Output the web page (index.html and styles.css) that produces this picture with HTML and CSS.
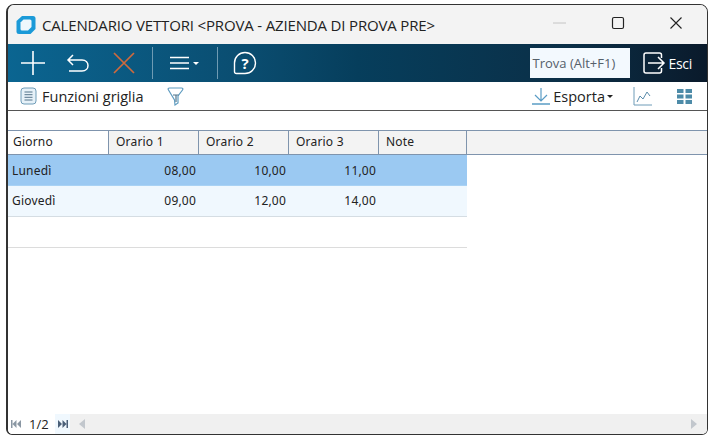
FILE: index.html
```html
<!DOCTYPE html>
<html lang="it">
<head>
<meta charset="utf-8">
<title>Calendario vettori</title>
<link rel="stylesheet" href="styles.css">
</head>
<body>
<div class="window">
  <header class="titlebar">
    <svg class="logo" width="20" height="20" viewBox="0 0 20 20">
      <path d="M6 1H17Q19.500 1 19.500 3.500V14L14.500 19H3Q0.500 19 0.500 16.500V6Z" fill="#1b9ad8"/>
      <path d="M7.500 4.500H14Q15.500 4.500 15.500 6V12L12 15.500H6Q4.500 15.500 4.500 14V7.500Z" fill="#eef7fc"/>
    </svg>
    <span class="title">CALENDARIO VETTORI &lt;PROVA - AZIENDA DI PROVA PRE&gt;</span>
    <div class="winctrls">
      <svg width="16" height="16" viewBox="0 0 16 16"><path d="M1 8H14" stroke="#c4c4c4" fill="none"/></svg>
      <svg width="16" height="16" viewBox="0 0 16 16"><rect x="2.500" y="2.500" width="11" height="11" rx="1.500" stroke="#222" stroke-width="1.200" fill="none"/></svg>
      <svg width="16" height="16" viewBox="0 0 16 16"><path d="M2.500 2.500L13.500 13.500M13.500 2.500L2.500 13.500" stroke="#222" stroke-width="1.100" fill="none"/></svg>
    </div>
  </header>
  <div class="toolbar">
    <svg class="tool-add" width="26" height="26" viewBox="0 0 26 26"><path d="M13 1V25M1 13H25" stroke="#fff" stroke-width="1.600" fill="none"/></svg>
    <svg class="tool-undo" width="24" height="20" viewBox="0 0 24 20"><path d="M7 2L2 7L7 12M2 7H16C24 7 24 18 16 18H3" stroke="#fff" stroke-width="1.500" fill="none"/></svg>
    <svg class="tool-cancel" width="24" height="24" viewBox="0 0 24 24"><path d="M2 2L22 22M22 2L2 22" stroke="#d06a3c" stroke-width="1.700" fill="none"/></svg>
    <span class="sep"></span>
    <svg class="tool-menu" width="19" height="14" viewBox="0 0 19 14"><path d="M0 1.500H19M0 7H19M0 12.500H19" stroke="#fff" stroke-width="1.400" fill="none"/></svg>
    <span class="caret caret-light"></span>
    <span class="sep sep-b"></span>
    <svg class="tool-help" width="24" height="24" viewBox="0 0 24 24"><path d="M1.500 12A10.500 10.500 0 1 1 12 22.500H3.500Q1.500 22.500 1.500 20.500Z" stroke="#fff" stroke-width="1.400" fill="none"/><text x="12" y="17.500" text-anchor="middle" class="help-q">?</text></svg>
    <div class="toolbar-right">
      <div class="search">Trova (Alt+F1)</div>
      <div class="exit">
        <svg width="24" height="24" viewBox="0 0 24 24"><path d="M19.500 7V4Q19.500 2 17.500 2H4Q2 2 2 4V20Q2 22 4 22H17.500Q19.500 22 19.500 20V17M6 12H22M16 6L22 12L16 18" stroke="#fff" stroke-width="1.500" fill="none"/></svg>
        <span>Esci</span>
      </div>
    </div>
  </div>
  <div class="subbar">
    <svg class="sub-list" width="17" height="18" viewBox="0 0 17 18"><rect x="1" y="1" width="15" height="16" rx="3" fill="#e6f1f8" stroke="#6f9cb8"/><path d="M4.500 5H12.500M4.500 7.700H12.500M4.500 10.300H12.500M4.500 13H12.500" stroke="#55748a"/></svg>
    <span class="sub-label">Funzioni griglia</span>
    <svg class="sub-filter" width="17" height="19" viewBox="0 0 17 19"><path d="M2.500 1H14.500Q16.500 1 15.500 3L11 9V16L8 18L7.500 13L1.500 3Q0.500 1 2.500 1Z" fill="#fff" stroke="#5f9cc0" stroke-width="1.200"/><path d="M6 8H11.500M9 8V15" stroke="#50758c" stroke-width="1.200"/></svg>
    <div class="subbar-right">
      <svg width="18" height="18" viewBox="0 0 18 18"><path d="M9 1V14M3 8L9 14L15 8" stroke="#5a9cc5" fill="none" stroke-width="1.200"/><path d="M0 17H18" stroke="#5a9cc5" stroke-width="1.400"/></svg>
      <span class="sub-label export">Esporta</span>
      <span class="caret caret-dark"></span>
      <svg class="sub-chart" width="19" height="19" viewBox="0 0 19 19"><path d="M1 0V18H19" stroke="#6f9cb8" fill="none"/><path d="M4 15L7 9L10 12L14 5L17 9" stroke="#5a8cab" fill="none"/></svg>
      <svg class="sub-grid" width="15" height="15" viewBox="0 0 15 15"><path d="M0 0H6.500V4H0ZM8.500 0H15V4H8.500ZM0 5.500H6.500V9.500H0ZM8.500 5.500H15V9.500H8.500ZM0 11H6.500V15H0ZM8.500 11H15V15H8.500Z" fill="#4d8ba8"/></svg>
    </div>
  </div>
  <div class="content">
    <div class="grid-head">
      <div class="hcell hcell-active c1">Giorno</div>
      <div class="hcell c2">Orario 1</div>
      <div class="hcell c2">Orario 2</div>
      <div class="hcell c2">Orario 3</div>
      <div class="hcell c3">Note</div>
      <div class="hcell-fill"></div>
    </div>
    <div class="row row-selected">
      <div class="cell c1">Lunedì</div>
      <div class="cell num c2">08,00</div>
      <div class="cell num c2">10,00</div>
      <div class="cell num c2">11,00</div>
      <div class="cell c3"></div>
    </div>
    <div class="row row-alt">
      <div class="cell c1">Giovedì</div>
      <div class="cell num c2">09,00</div>
      <div class="cell num c2">12,00</div>
      <div class="cell num c2">14,00</div>
      <div class="cell c3"></div>
    </div>
    <div class="row row-empty"></div>
  </div>
  <footer class="statusbar">
    <svg class="pager" width="10" height="8" viewBox="0 0 10 8"><path d="M0 0H1.500V8H0ZM5.500 0V8L1.500 4ZM10 0V8L6 4Z" fill="#8a97a3"/></svg>
    <span class="page">1/2</span>
    <div class="next">
      <svg width="10" height="8" viewBox="0 0 10 8"><path d="M0 0L4 4L0 8ZM4.500 0L8.500 4L4.500 8ZM8.500 0H10V8H8.500Z" fill="#4a5f78"/></svg>
    </div>
    <div class="scroll">
      <svg width="6" height="10" viewBox="0 0 6 10"><path d="M6 0V10L0 5Z" fill="#c2c7cd"/></svg>
      <svg width="6" height="10" viewBox="0 0 6 10"><path d="M0 0V10L6 5Z" fill="#c2c7cd"/></svg>
    </div>
  </footer>
</div>
</body>
</html>
```
FILE: styles.css
```css
* { box-sizing: border-box; }
html, body { margin: 0; padding: 0; background: #fff; }
body { width: 710px; height: 436px; overflow: hidden; padding: 4px 2px 1px 6px; }

.window {
  width: 702px;
  height: 431px;
  border: 1px solid #333;
  border-left-width: 2px;
  border-radius: 8px 8px 6px 6px;
  overflow: hidden;
  display: flex;
  flex-direction: column;
  background: #fff;
}

.titlebar {
  height: 39px;
  flex: none;
  background: #f3f3f3;
  display: flex;
  align-items: center;
  padding-left: 8px;
}
.logo { flex: none; }
.title {
  margin-left: 6px;
  font: 15px "Open Sans", "Noto Sans", sans-serif;
  color: #222;
  letter-spacing: -0.16px;
  white-space: nowrap;
}
.winctrls {
  margin-left: auto;
  display: flex;
  gap: 42px;
  padding-right: 23px;
  margin-bottom: 3px;
}

.toolbar {
  height: 38px;
  flex: none;
  display: flex;
  align-items: center;
  padding-left: 12px;
  background: linear-gradient(90deg, #0b6591 0%, #0a4c6f 35%, #063e5c 50%, #0b2f47 80%, #0a1a2b 100%);
}
.tool-undo { margin-left: 20px; }
.tool-cancel { margin-left: 22px; }
.sep { width: 1px; height: 32px; background: #6f9bb3; margin-left: 16px; flex: none; }
.sep-b { margin-left: 18px; }
.tool-menu { margin-left: 17px; }
.caret { width: 0; height: 0; border-left: 3px solid transparent; border-right: 3px solid transparent; }
.caret-light { border-top: 3px solid #fff; margin-left: 4px; }
.caret-dark { border-top: 3px solid #222; margin-left: 2px; }
.tool-help { margin-left: 15px; }
.help-q { font: bold 15px "Open Sans", sans-serif; fill: #fff; }
.toolbar-right { margin-left: auto; display: flex; align-items: center; height: 100%; }
.search {
  width: 100px;
  height: 30px;
  background: #f3f9fe;
  color: #55606a;
  font: 13px/30px "Open Sans", sans-serif;
  padding-left: 3px;
  white-space: nowrap;
}
.exit {
  display: flex;
  align-items: center;
  gap: 3px;
  margin-left: 12px;
  padding-right: 15px;
  color: #fff;
  font: 14px "Open Sans", sans-serif;
  letter-spacing: -0.3px;
}

.subbar {
  height: 29px;
  flex: none;
  border-bottom: 1px solid #555;
  display: flex;
  align-items: center;
  padding-left: 12px;
  background: #fff;
}
.sub-label { margin-left: 5px; font: 14.500px "Open Sans", sans-serif; color: #222; }
.sub-filter { margin-left: 24px; }
.subbar-right { margin-left: auto; display: flex; align-items: center; padding-right: 15px; }
.export { margin-left: 3px; }
.sub-chart { margin-left: 20px; }
.sub-grid { margin-left: 25px; }

.content { flex: 1; padding-top: 19px; min-height: 0; font: 12px "Noto Sans", sans-serif; letter-spacing: 0.2px; color: #222; }
.grid-head { display: flex; height: 25px; border-top: 1px solid #7f94ad; border-bottom: 1px solid #7f94ad; background: #f3f3f3; }
.hcell { height: 100%; border-right: 1px solid #7f94ad; line-height: 22px; padding-left: 7px; }
.hcell-active { background: #fff; padding-left: 5px; }
.hcell-fill { flex: 1; }
.c1 { width: 101px; }
.c2 { width: 90px; }
.c3 { width: 88px; }

.row { display: flex; height: 31px; width: 459px; }
.row-selected { background: #9bc9f2; border-bottom: 1px solid #a9d2f4; }
.row-selected .cell { line-height: 32px; }
.row-alt { background: #f0f8fe; border-bottom: 1px solid #d5dde3; }
.row-empty { border-bottom: 1px solid #dcdcdc; }
.cell { line-height: 30px; padding: 0 4px; flex: none; }
.num { text-align: right; padding-right: 3px; }

.statusbar {
  height: 20px;
  flex: none;
  display: flex;
  align-items: center;
  background: #fff;
  padding-left: 3px;
  font: 13px "Open Sans", sans-serif;
  color: #222;
}
.page { margin-left: 8px; width: 26px; }
.next { width: 15px; height: 100%; background: #f0f8fe; display: flex; align-items: center; justify-content: center; }
.scroll {
  flex: 1;
  height: 100%;
  background: #f0f0f0;
  display: flex;
  align-items: center;
  justify-content: space-between;
  padding: 0 10px 0 9px;
}
```
